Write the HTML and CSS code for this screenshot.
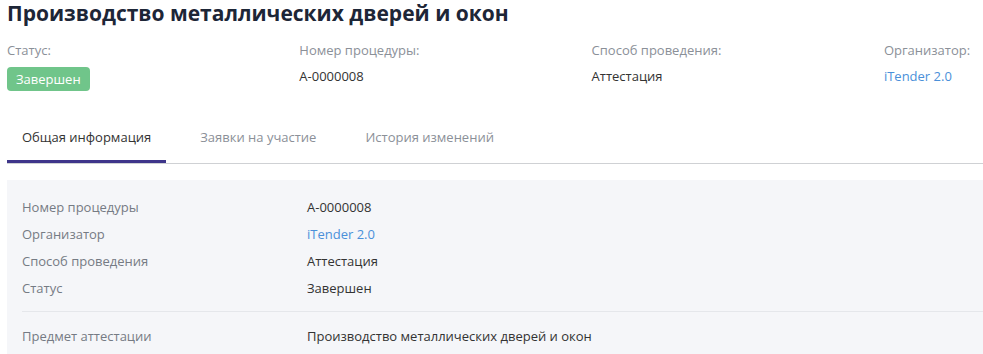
FILE: index.html
```html
<!DOCTYPE html>
<html lang="ru">
<head>
<meta charset="utf-8">
<title>Производство металлических дверей и окон</title>
<link rel="stylesheet" href="styles.css">
</head>
<body>
<div class="page">
  <h1 class="title">Производство металлических дверей и окон</h1>
  <div class="summary">
    <div class="summary-item">
      <div class="summary-label">Статус:</div>
      <div class="summary-value"><span class="badge">Завершен</span></div>
    </div>
    <div class="summary-item">
      <div class="summary-label">Номер процедуры:</div>
      <div class="summary-value">А-0000008</div>
    </div>
    <div class="summary-item">
      <div class="summary-label">Способ проведения:</div>
      <div class="summary-value">Аттестация</div>
    </div>
    <div class="summary-item">
      <div class="summary-label">Организатор:</div>
      <div class="summary-value"><a class="link" href="#">iTender 2.0</a></div>
    </div>
  </div>
  <div class="tabs">
    <div class="tab tab-active">Общая информация</div>
    <div class="tab">Заявки на участие</div>
    <div class="tab">История изменений</div>
  </div>
  <div class="panel">
    <div class="section">
      <div class="row"><div class="row-label">Номер процедуры</div><div class="row-value">А-0000008</div></div>
      <div class="row"><div class="row-label">Организатор</div><div class="row-value"><a class="link" href="#">iTender 2.0</a></div></div>
      <div class="row"><div class="row-label">Способ проведения</div><div class="row-value">Аттестация</div></div>
      <div class="row"><div class="row-label">Статус</div><div class="row-value">Завершен</div></div>
    </div>
    <div class="section section-bordered">
      <div class="row"><div class="row-label">Предмет аттестации</div><div class="row-value">Производство металлических дверей и окон</div></div>
    </div>
  </div>
</div>
</body>
</html>
```

FILE: styles.css
```css
html, body {
  margin: 0;
  padding: 0;
  overflow: hidden;
  background: #ffffff;
}
body {
  font-family: "Open Sans", "Liberation Sans", sans-serif;
  font-size: 13px;
  color: #333333;
}
.page {
  width: 1169px;
  padding-left: 7px;
}
.title {
  margin: 0;
  font-size: 21px;
  line-height: 26px;
  font-weight: 700;
  color: #1d2637;
}
.summary {
  display: grid;
  grid-template-columns: repeat(4, 292.3px);
  margin-top: 15px;
}
.summary-label {
  line-height: 18px;
  color: #8b9098;
}
.summary-value {
  margin-top: 8px;
  line-height: 18px;
  color: #333333;
}
.badge {
  display: inline-block;
  padding: 3px 9px;
  line-height: 18px;
  border-radius: 4px;
  background: #70c58a;
  color: #ffffff;
}
.link {
  color: #4a90d9;
  text-decoration: none;
}
.tabs {
  display: flex;
  gap: 19px;
  margin-top: 37px;
  border-bottom: 1px solid #cfd1d4;
}
.tab {
  padding: 0 15px;
  height: 35px;
  line-height: 18px;
  box-sizing: border-box;
  color: #8b9098;
  font-size: 13px;
}
.tab-active {
  color: #333333;
  border-bottom: 3px solid #3e358a;
  margin-bottom: -1px;
}
.panel {
  margin-top: 16px;
  background: #f5f6f9;
  padding: 14px 0 0 15px;
  height: 200px;
}
.section {
  padding-bottom: 9px;
}
.section-bordered {
  border-top: 1px solid #e5e7eb;
  padding-top: 11px;
}
.row {
  display: flex;
  line-height: 27px;
}
.row-label {
  width: 285px;
  color: #757b84;
}
.row-value {
  color: #333333;
}
```
